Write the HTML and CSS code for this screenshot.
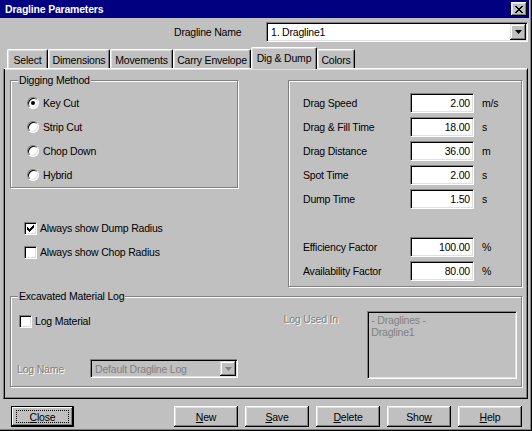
FILE: index.html
```html
<!DOCTYPE html>
<html>
<head>
<meta charset="utf-8">
<title>Dragline Parameters</title>
<link rel="stylesheet" href="styles.css">
</head>
<body>
<div class="window">
  <div class="titlebar">
    <span class="title">Dragline Parameters</span>
    <span class="title-close">
      <svg width="8" height="7" viewBox="0 0 8 7"><path d="M0 0h2v1h1v1h2v-1h1v-1h2v1h-1v1h-1v1h-1v1h1v1h1v1h1v1h-2v-1h-1v-1h-2v1h-1v1h-2v-1h1v-1h1v-1h1v-1h-1v-1h-1v-1h-1z" fill="#000"/></svg>
    </span>
  </div>

  <div class="name-row">
    <span class="name-label">Dragline Name</span>
    <div class="combo name-combo">
      <span class="combo-text">1. Dragline1</span>
      <span class="combo-btn"><svg width="7" height="4" viewBox="0 0 7 4"><path d="M0 0h7l-3.5 4z" fill="#000"/></svg></span>
    </div>
  </div>

  <div class="tabs">
    <span class="tab w-select">Select</span>
    <span class="tab w-dim">Dimensions</span>
    <span class="tab w-mov">Movements</span>
    <span class="tab w-carry">Carry Envelope</span>
    <span class="tab tab-active w-dig">Dig &amp; Dump</span>
    <span class="tab w-colors">Colors</span>
  </div>

  <div class="panel">
    <div class="top-row">
      <div class="left-col">
        <div class="group dig-group">
          <span class="legend">Digging Method</span>
          <div class="opt"><span class="radio"><span class="dot"></span></span><span>Key Cut</span></div>
          <div class="opt"><span class="radio"></span><span>Strip Cut</span></div>
          <div class="opt"><span class="radio"></span><span>Chop Down</span></div>
          <div class="opt"><span class="radio"></span><span>Hybrid</span></div>
        </div>
        <div class="checks">
          <div class="check-row"><span class="checkbox"><svg width="7" height="7" viewBox="0 0 7 7"><path d="M0 2h1v1h1v1h1v-1h1v-1h1v-1h1v-1h1v3h-1v1h-1v1h-1v1h-1v1h-1v-1h-1v-1h-1z" fill="#000"/></svg></span><span>Always show Dump Radius</span></div>
          <div class="check-row"><span class="checkbox"></span><span>Always show Chop Radius</span></div>
        </div>
      </div>

      <div class="group params">
        <div class="prow"><span class="plabel">Drag Speed</span><span class="field">2.00</span><span class="unit">m/s</span></div>
        <div class="prow"><span class="plabel">Drag &amp; Fill Time</span><span class="field">18.00</span><span class="unit">s</span></div>
        <div class="prow"><span class="plabel">Drag Distance</span><span class="field">36.00</span><span class="unit">m</span></div>
        <div class="prow"><span class="plabel">Spot Time</span><span class="field">2.00</span><span class="unit">s</span></div>
        <div class="prow"><span class="plabel">Dump Time</span><span class="field">1.50</span><span class="unit">s</span></div>
        <div class="pspacer"></div>
        <div class="prow"><span class="plabel">Efficiency Factor</span><span class="field">100.00</span><span class="unit">%</span></div>
        <div class="prow"><span class="plabel">Availability Factor</span><span class="field">80.00</span><span class="unit">%</span></div>
      </div>
    </div>

    <div class="group excav">
      <span class="legend">Excavated Material Log</span>
      <div class="excav-left">
        <div class="check-row small"><span class="checkbox"></span><span>Log Material</span></div>
        <div class="logname-row">
          <span class="disabled logname-label">Log Name</span>
          <div class="combo log-combo">
            <span class="combo-text">Default Dragline Log</span>
            <span class="combo-btn"><svg width="7" height="4" viewBox="0 0 7 4"><path d="M0 0h7l-3.5 4z" fill="#808080"/></svg></span>
          </div>
        </div>
      </div>
      <span class="disabled used-label">Log Used In</span>
      <div class="listbox">
        <div>- Draglines -</div>
        <div>Dragline1</div>
      </div>
    </div>
  </div>

  <div class="buttons">
    <span class="btn btn-default"><span class="focus"><u>C</u>lose</span></span>
    <span class="btn btn-new"><u>N</u>ew</span>
    <span class="btn"><u>S</u>ave</span>
    <span class="btn"><u>D</u>elete</span>
    <span class="btn">Sho<u>w</u></span>
    <span class="btn"><u>H</u>elp</span>
  </div>
</div>
</body>
</html>
```

FILE: styles.css
```css
* { box-sizing: border-box; }
html, body { margin: 0; padding: 0; }
body {
  width: 532px;
  height: 431px;
  background: #c0c0c0;
  font-family: "Liberation Sans", Arial, sans-serif;
  font-size: 10.5px;
  letter-spacing: -0.2px;
  color: #000;
  overflow: hidden;
}
.window {
  width: 532px;
  height: 431px;
  background: #c0c0c0;
  display: flex;
  flex-direction: column;
  box-shadow: inset -1px -1px #000, inset -2px -2px #808080;
}

/* title bar */
.titlebar {
  height: 18px;
  width: 529px;
  background: #000080;
  color: #fff;
  display: flex;
  align-items: center;
  justify-content: space-between;
  padding: 0 2px 0 5px;
}
.title { font-weight: bold; font-size: 10.5px; }
.title-close {
  width: 16px;
  height: 14px;
  background: #c0c0c0;
  display: flex;
  align-items: center;
  justify-content: center;
  box-shadow: inset -1px -1px #000, inset 1px 1px #fff, inset -2px -2px #808080, inset 2px 2px #dfdfdf;
}

/* name row */
.name-row {
  margin-top: 4px;
  height: 20px;
  display: flex;
  align-items: center;
  padding-left: 174px;
}
.name-label { width: 92px; }
.combo {
  display: flex;
  align-items: stretch;
  background: #fff;
  border: 1px solid;
  border-color: #808080 #fff #fff #808080;
  box-shadow: inset 1px 1px #000, inset -1px -1px #dfdfdf;
  padding: 1px;
}
.name-combo { width: 262px; height: 20px; }
.combo-text {
  flex: 1;
  display: flex;
  align-items: center;
  padding-left: 3px;
}
.combo-btn {
  width: 16px;
  background: #c0c0c0;
  display: flex;
  align-items: center;
  justify-content: center;
  box-shadow: inset -1px -1px #000, inset 1px 1px #dfdfdf, inset -2px -2px #808080, inset 2px 2px #fff;
}

/* tabs */
.tabs {
  margin-top: 5px;
  height: 21px;
  display: flex;
  align-items: flex-end;
  padding-left: 7px;
  position: relative;
  z-index: 1;
}
.tab {
  height: 19px;
  display: flex;
  align-items: center;
  justify-content: center;
  border-top: 1px solid #fff;
  border-left: 1px solid #fff;
  border-right: 1px solid #000;
  box-shadow: inset -1px 0 #808080, inset 1px 1px #dfdfdf;
  border-radius: 2px 2px 0 0;
  background: #c0c0c0;
  padding-top: 1px;
  white-space: nowrap;
}
.tab-active {
  height: 22px;
  margin-bottom: -1px;
  padding-top: 0;
  padding-bottom: 2px;
}
.w-select { width: 41px; }
.w-dim { width: 62px; }
.w-mov { width: 63px; }
.w-carry { width: 78px; }
.w-dig { width: 66px; }
.w-colors { width: 38px; }

/* panel */
.panel {
  margin-left: 3px;
  width: 525px;
  height: 331px;
  border: 1px solid;
  border-color: #fff #000 #000 #808080;
  box-shadow: inset 1px 0 #000, inset 0 1px #dfdfdf, inset -1px -1px #808080;
  padding: 11px 5px 0 6px;
  display: flex;
  flex-direction: column;
}
.top-row {
  display: flex;
  justify-content: space-between;
}
.left-col { width: 228px; }

.group {
  position: relative;
  border: 1px solid #808080;
  box-shadow: inset 1px 1px #fff, 1px 1px #fff;
}
.legend {
  position: absolute;
  top: -7px;
  left: 7px;
  padding: 0 1px;
  background: #c0c0c0;
  line-height: 13px;
}

.dig-group {
  width: 228px;
  height: 108px;
  padding: 10px 0 0 16px;
}
.opt {
  height: 24px;
  display: flex;
  align-items: center;
  gap: 4px;
}
.radio {
  width: 12px;
  height: 12px;
  border-radius: 50%;
  background: #fff;
  border: 1px solid;
  border-color: #808080 #fff #fff #808080;
  box-shadow: inset 1px 1px #000, inset -1px -1px #dfdfdf;
  display: flex;
  align-items: center;
  justify-content: center;
}
.dot {
  width: 4px;
  height: 4px;
  border-radius: 50%;
  background: #000;
}

.checks {
  margin-top: 28px;
  padding-left: 14px;
}
.check-row {
  height: 24px;
  display: flex;
  align-items: center;
  gap: 3px;
}
.checkbox {
  width: 13px;
  height: 13px;
  background: #fff;
  border: 1px solid;
  border-color: #808080 #fff #fff #808080;
  box-shadow: inset 1px 1px #000, inset -1px -1px #dfdfdf;
  display: flex;
  align-items: center;
  justify-content: center;
}

/* params */
.params {
  width: 234px;
  height: 207px;
  padding: 10px 0 0 14px;
}
.prow {
  height: 24px;
  display: flex;
  align-items: center;
}
.pspacer { height: 24px; }
.plabel { width: 107px; }
.field {
  width: 64px;
  height: 20px;
  background: #fff;
  border: 1px solid;
  border-color: #808080 #fff #fff #808080;
  box-shadow: inset 1px 1px #000, inset -1px -1px #dfdfdf;
  display: flex;
  align-items: center;
  justify-content: flex-end;
  padding-right: 3px;
}
.unit { margin-left: 8px; }

/* excavated group */
.excav {
  margin-top: 9px;
  width: 512px;
  height: 91px;
  padding: 14px 4px 0 8px;
  display: flex;
  align-items: flex-start;
}
.excav-left { width: 220px; }
.check-row.small { height: 20px; }
.logname-row {
  margin-top: 28px;
  display: flex;
  align-items: center;
  margin-left: -2px;
}
.logname-label { width: 73px; }
.log-combo {
  width: 148px;
  height: 19px;
  background: #c0c0c0;
  color: #808080;
}
.disabled {
  color: #808080;
  text-shadow: 1px 1px 0 #fff;
}
.used-label {
  margin-left: 45px;
  height: 16px;
  line-height: 16px;
  width: 84px;
}
.listbox {
  width: 150px;
  height: 68px;
  background: #c0c0c0;
  color: #808080;
  border: 1px solid;
  border-color: #808080 #fff #fff #808080;
  box-shadow: inset 1px 1px #000, inset -1px -1px #dfdfdf;
  padding: 2px 3px;
  line-height: 12px;
}

/* buttons */
.buttons {
  margin-top: 7px;
  height: 21px;
  display: flex;
  padding-left: 11px;
  gap: 7px;
}
.btn {
  width: 64px;
  height: 21px;
  display: flex;
  align-items: center;
  justify-content: center;
  background: #c0c0c0;
  box-shadow: inset -1px -1px #000, inset 1px 1px #fff, inset -2px -2px #808080, inset 2px 2px #dfdfdf;
}
.btn-default {
  width: 63px;
  border: 1px solid #000;
  box-shadow: inset -1px -1px #000, inset 1px 1px #fff, inset -2px -2px #808080;
}
.focus {
  width: 53px;
  height: 13px;
  border: 1px dotted #000;
  display: flex;
  align-items: center;
  justify-content: center;
}
.btn-new { margin-left: 93px; }
```
